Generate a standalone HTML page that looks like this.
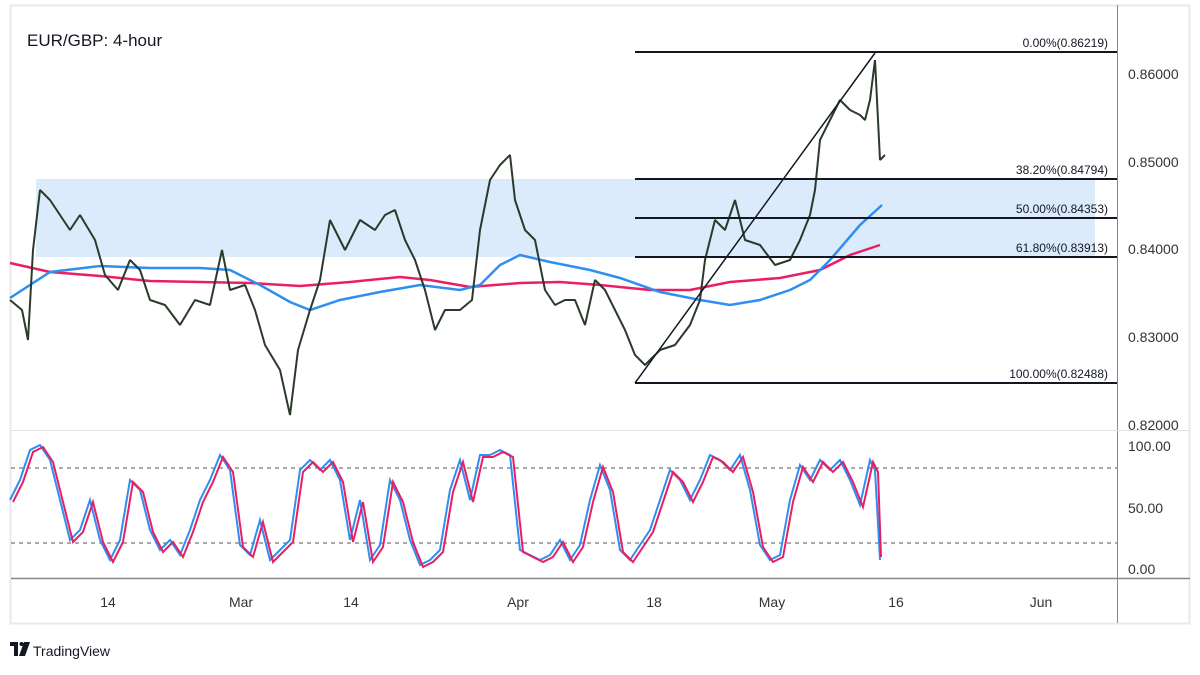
<!DOCTYPE html>
<html><head><meta charset="utf-8"><style>
html,body{margin:0;padding:0;background:#fff;}
body{width:1200px;height:675px;overflow:hidden;position:relative;font-family:"Liberation Sans",sans-serif;}
</style></head><body>
<svg width="1200" height="675" viewBox="0 0 1200 675" xmlns="http://www.w3.org/2000/svg" style="position:absolute;left:0;top:0">
<rect x="10.5" y="5.5" width="1179" height="618" fill="#fff" stroke="#e8e9ec" stroke-width="2"/>
<!-- zone -->
<rect x="36" y="179" width="1059" height="78" fill="#dcebfb"/>
<!-- axes -->
<line x1="1117.5" y1="5" x2="1117.5" y2="623" stroke="#888" stroke-width="1"/>
<line x1="11" y1="430.5" x2="1190" y2="430.5" stroke="#e0e3eb" stroke-width="1"/>
<line x1="11" y1="578.5" x2="1190" y2="578.5" stroke="#888" stroke-width="1.5"/>
<line x1="11" y1="468" x2="1117" y2="468" stroke="#555" stroke-dasharray="4 4" stroke-width="1"/>
<line x1="11" y1="543" x2="1117" y2="543" stroke="#555" stroke-dasharray="4 4" stroke-width="1"/>
<!-- MAs -->
<polyline fill="none" stroke="#e91e63" stroke-width="2.5" points="10,263 50,272 100,276 150,281 200,282 250,283 300,286 350,282 400,277 430,280 470,287 520,283 560,282 600,285 650,290 690,290 730,282 780,278 820,270 850,255 880,245"/>
<polyline fill="none" stroke="#2f8ff0" stroke-width="2.5" points="10,298 50,272 100,266 150,268 200,268 230,270 260,285 290,302 310,310 340,300 380,292 420,285 460,290 480,285 500,265 520,255 550,262 590,270 620,278 660,292 700,300 730,305 760,300 790,290 810,280 830,260 860,225 882,205"/>
<!-- price -->
<polyline fill="none" stroke="#2b3a2b" stroke-width="2" stroke-linejoin="bevel" points="10,300 22,310 28,340 33,250 40,190 50,200 60,215 70,230 80,215 95,240 105,275 118,290 130,260 140,270 150,300 165,305 180,325 195,300 210,305 222,250 230,290 245,285 255,310 265,345 280,370 290,415 298,350 310,310 320,280 330,220 345,250 360,220 375,230 385,215 395,210 405,240 415,260 425,290 435,330 445,310 460,310 472,300 480,230 490,180 500,165 510,155 515,200 525,230 535,240 545,290 555,305 565,300 575,300 585,325 595,280 605,290 615,310 625,330 635,355 645,365 660,350 675,345 690,325 700,300 705,260 715,220 725,230 735,200 745,240 760,245 775,265 790,260 800,240 810,215 815,190 820,140 830,120 840,100 850,110 860,115 865,120 870,100 875,60 878,120 880,160 885,155"/>
<!-- fib -->
<g stroke="#131722" stroke-width="2">
<line x1="635" y1="52" x2="1117" y2="52"/>
<line x1="635" y1="179" x2="1117" y2="179"/>
<line x1="635" y1="218" x2="1117" y2="218"/>
<line x1="635" y1="257" x2="1117" y2="257"/>
<line x1="635" y1="383" x2="1117" y2="383"/>
<line x1="635" y1="383" x2="875" y2="53" stroke-width="1.5"/>
</g>
<g font-size="12" fill="#131722" text-anchor="end" font-family="Liberation Sans Narrow, Liberation Sans, sans-serif">
<text x="1108" y="47">0.00%(0.86219)</text>
<text x="1108" y="174">38.20%(0.84794)</text>
<text x="1108" y="213">50.00%(0.84353)</text>
<text x="1108" y="252">61.80%(0.83913)</text>
<text x="1108" y="378">100.00%(0.82488)</text>
</g>
<!-- stoch -->
<polyline fill="none" stroke="#2f8ff0" stroke-width="2" points="10,500 20,480 30,450 40,445 50,460 60,500 70,540 80,530 90,500 100,540 110,560 120,540 130,480 140,490 150,530 160,550 170,540 180,555 190,530 200,500 210,480 220,455 230,470 240,545 250,555 260,520 270,560 280,550 290,540 300,470 310,460 320,470 330,460 340,480 350,540 360,500 370,560 380,545 390,480 400,500 410,540 420,565 430,560 440,550 450,490 460,460 470,500 480,455 490,455 500,450 510,455 520,550 530,555 540,560 550,555 560,540 570,560 580,545 590,500 600,465 610,490 620,550 630,560 640,545 650,530 660,500 670,470 680,480 690,500 700,480 710,455 720,460 730,470 740,455 750,490 760,545 770,560 780,555 790,500 800,465 810,480 820,460 830,470 840,460 850,480 860,505 870,460 875,470 880,560"/>
<polyline fill="none" stroke="#e91e63" stroke-width="2" transform="translate(3,2)" points="10,500 20,480 30,450 40,445 50,460 60,500 70,540 80,530 90,500 100,540 110,560 120,540 130,480 140,490 150,530 160,550 170,540 180,555 190,530 200,500 210,480 220,455 230,470 240,545 250,555 260,520 270,560 280,550 290,540 300,470 310,460 320,470 330,460 340,480 350,540 360,500 370,560 380,545 390,480 400,500 410,540 420,565 430,560 440,550 450,490 460,460 470,500 480,455 490,455 500,450 510,455 520,550 530,555 540,560 550,555 560,540 570,560 580,545 590,500 600,465 610,490 620,550 630,560 640,545 650,530 660,500 670,470 680,480 690,500 700,480 710,455 720,460 730,470 740,455 750,490 760,545 770,560 780,555 790,500 800,465 810,480 820,460 830,470 840,460 850,480 860,505 870,460 875,470 878,555"/>
<!-- labels -->
<g font-size="14" fill="#333">
<text x="1128" y="79">0.86000</text>
<text x="1128" y="167">0.85000</text>
<text x="1128" y="254">0.84000</text>
<text x="1128" y="342">0.83000</text>
<text x="1128" y="430">0.82000</text>
<text x="1128" y="451">100.00</text>
<text x="1128" y="513">50.00</text>
<text x="1128" y="574">0.00</text>
</g>
<g font-size="14" fill="#333" text-anchor="middle">
<text x="108" y="607">14</text>
<text x="241" y="607">Mar</text>
<text x="351" y="607">14</text>
<text x="518" y="607">Apr</text>
<text x="654" y="607">18</text>
<text x="772" y="607">May</text>
<text x="896" y="607">16</text>
<text x="1041" y="607">Jun</text>
</g>
<text x="27" y="46" font-size="17" fill="#131722">EUR/GBP: 4-hour</text>
<!-- logo -->
<g fill="#131722">
<rect x="10" y="642" width="8" height="4"/><rect x="14" y="642" width="4" height="14"/>
<circle cx="21.5" cy="644" r="2"/>
<polygon points="24,642 30,642 25,656 19,656"/>
</g>
<text x="33" y="656" font-size="14" fill="#131722">TradingView</text>
</svg>
</body></html>
